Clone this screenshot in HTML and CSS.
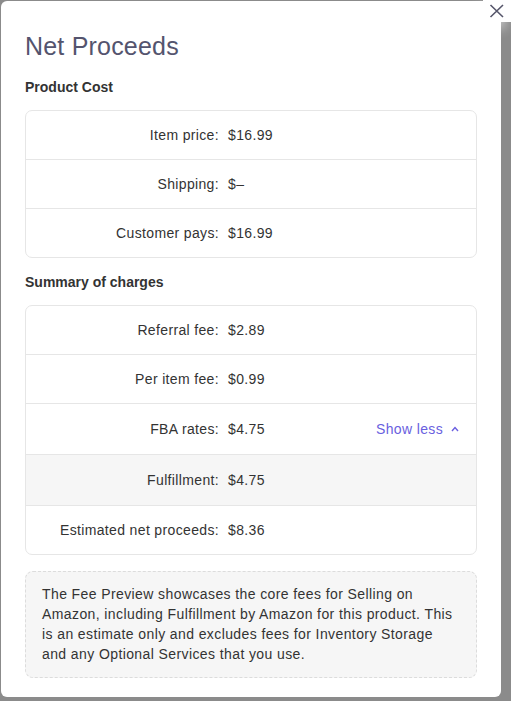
FILE: index.html
```html
<!DOCTYPE html>
<html>
<head>
    <title>Net Proceeds</title>
    <link rel="stylesheet" href="styles.css">
</head>
<body>

    <div class="backdrop">
        <div class="modal">
            <h2 class="modal-title">Net Proceeds</h2>

            <h3 class="section-title">Product Cost</h3>
            <div class="fee-card">
                <div class="fee-row">
                    <span class="fee-label">Item price:</span>
                    <span class="fee-value">$16.99</span>
                </div>
                <div class="fee-row">
                    <span class="fee-label">Shipping:</span>
                    <span class="fee-value">$–</span>
                </div>
                <div class="fee-row">
                    <span class="fee-label">Customer pays:</span>
                    <span class="fee-value">$16.99</span>
                </div>
            </div>

            <h3 class="section-title">Summary of charges</h3>
            <div class="fee-card">
                <div class="fee-row">
                    <span class="fee-label">Referral fee:</span>
                    <span class="fee-value">$2.89</span>
                </div>
                <div class="fee-row">
                    <span class="fee-label">Per item fee:</span>
                    <span class="fee-value">$0.99</span>
                </div>
                <div class="fee-row fee-row-tall">
                    <span class="fee-label">FBA rates:</span>
                    <span class="fee-value">$4.75</span>
                    <a class="toggle-link" href="#">Show less
                        <svg class="toggle-caret" width="8" height="6" viewBox="0 0 8 6">
                            <path d="M1 5 L4 1.6 L7 5" fill="none" stroke="currentColor" stroke-width="1.4"/>
                        </svg>
                    </a>
                </div>
                <div class="fee-row fee-row-tall fee-row-sub">
                    <span class="fee-label">Fulfillment:</span>
                    <span class="fee-value">$4.75</span>
                </div>
                <div class="fee-row">
                    <span class="fee-label">Estimated net proceeds:</span>
                    <span class="fee-value">$8.36</span>
                </div>
            </div>

            <div class="fee-note">
                The Fee Preview showcases the core fees for Selling on Amazon, including Fulfillment by Amazon for this product. This is an estimate only and excludes fees for Inventory Storage and any Optional Services that you use.
            </div>
        </div>

        <button class="close-btn" type="button">
            <svg width="16" height="14" viewBox="0 0 16 14">
                <path d="M1.5 1 L14 13 M14 1 L1.5 13" stroke="#55556a" stroke-width="1.6" fill="none"/>
            </svg>
        </button>
    </div>

</body>
</html>
```

FILE: styles.css
```css
body {
    margin: 0;
    background-color: #8b8b8b;
    font-family: "Liberation Sans", Arial, sans-serif;
    overflow: hidden;
}

.backdrop {
    position: relative;
    height: 701px;
    padding: 1px 10px 0 1px;
    box-sizing: border-box;
}

.modal {
    background-color: white;
    width: 500px;
    height: 696px;
    box-sizing: border-box;
    padding: 30px 24px 0 24px;
    border-radius: 6px;
}

.modal-title {
    margin: 0 0 16px 0;
    font-size: 25px;
    line-height: 30px;
    font-weight: normal;
    color: #54546e;
    letter-spacing: 0.2px;
}

.section-title {
    margin: 14px 0 13px 0;
    font-size: 14px;
    line-height: 20px;
    font-weight: bold;
    color: #333;
}

.fee-card {
    border: 1px solid #e6e6e6;
    border-radius: 7px;
    overflow: hidden;
    margin-bottom: 14px;
}

.fee-row {
    display: flex;
    align-items: center;
    height: 48px;
    border-bottom: 1px solid #e6e6e6;
    font-size: 14px;
    color: #333;
    letter-spacing: 0.35px;
}

.fee-row:last-child {
    border-bottom: none;
}

.fee-row-tall {
    height: 50px;
}

.fee-row-sub {
    background-color: #f6f6f6;
}

.fee-label {
    width: 193px;
    text-align: right;
}

.fee-value {
    margin-left: 9px;
}

.toggle-link {
    margin-left: auto;
    margin-right: 17px;
    color: #6a5fe0;
    text-decoration: none;
    display: flex;
    align-items: center;
    gap: 8px;
}

.toggle-caret {
    display: block;
}

.fee-note {
    margin-top: 16px;
    padding: 12px 16px 13px 16px;
    border: 1px dashed #dcdcdc;
    border-radius: 8px;
    background-color: #f6f6f6;
    font-size: 14px;
    line-height: 20px;
    color: #333;
    letter-spacing: 0.4px;
}

.close-btn {
    position: absolute;
    top: 0;
    right: 0;
    width: 28px;
    height: 22px;
    padding: 0;
    border: none;
    background-color: white;
    display: flex;
    align-items: center;
    justify-content: center;
    box-shadow: -6px 6px 12px rgba(255, 255, 255, 0.6);
    cursor: pointer;
}
```
